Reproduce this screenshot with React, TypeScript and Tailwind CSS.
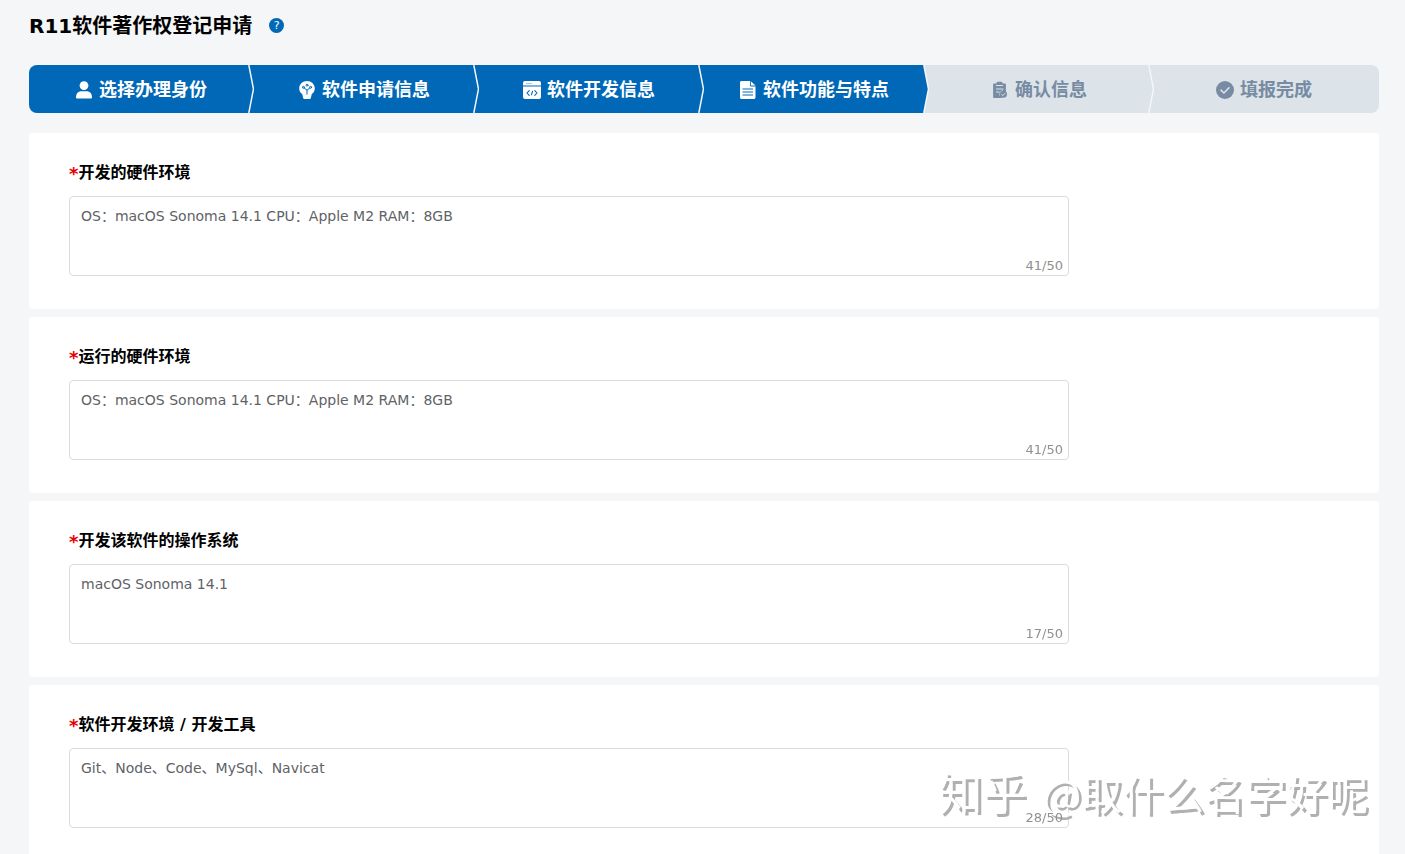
import { useState, type ReactNode } from "react";

interface Step {
  title: string;
  done: boolean;
  icon: ReactNode;
}

interface Field {
  id: string;
  label: string;
  value: string;
  savedLength: number;
}

const iconClass = "h-[18px] w-[18px] shrink-0";

const UserIcon = () => (
  <svg viewBox="0 0 18 18" className={iconClass} fill="currentColor" aria-hidden="true">
    <circle cx="9" cy="4.6" r="4.4" />
    <path d="M1 16.2c0-3.8 2.6-5.9 5.4-5.9h5.2c2.8 0 5.4 2.1 5.4 5.9 0 .9-.5 1.4-1.3 1.4H2.3c-.8 0-1.3-.5-1.3-1.4Z" />
  </svg>
);

const IdeaIcon = () => (
  <svg viewBox="0 0 18 18" className={iconClass} aria-hidden="true">
    <path
      fill="currentColor"
      d="M9 0C4.700 0 1.200 3.200 1.200 7.300c0 2.600 1.200 4.500 3 5.700l.9 3.700c.2.900.7 1.300 1.500 1.300h4.800c.8 0 1.300-.4 1.500-1.300l.9-3.700c1.800-1.200 3-3.100 3-5.700C16.800 3.200 13.300 0 9 0Z"
    />
    <g fill="none" stroke="#0068b7" strokeWidth="1" strokeLinecap="round" strokeLinejoin="round">
      <circle cx="5.400" cy="6.300" r="1" />
      <circle cx="12.600" cy="6.300" r="1" />
      <circle cx="9" cy="4.200" r=".9" />
      <path d="m6.200 7 2.800 2.200L11.800 7M9 9.200v4" />
    </g>
  </svg>
);

const CodeIcon = () => (
  <svg viewBox="0 0 18 18" className={iconClass} aria-hidden="true">
    <path fill="currentColor" d="M2 0h14a2 2 0 0 1 2 2v2.600H0V2a2 2 0 0 1 2-2Z" />
    <path fill="currentColor" d="M0 5.400h18V16a2 2 0 0 1-2 2H2a2 2 0 0 1-2-2V5.400Z" />
    <g fill="none" stroke="#0068b7" strokeWidth="1.100" strokeLinecap="round" strokeLinejoin="round">
      <path d="M3.500 2.600h5" strokeWidth=".4" />
      <path d="m6.200 9.600-2.200 2.400 2.200 2.400M11.800 9.600l2.200 2.400-2.200 2.400M9.600 10.200l-1.200 3.600" />
    </g>
  </svg>
);

const DocIcon = () => (
  <svg viewBox="0 0 18 18" className={iconClass} aria-hidden="true">
    <path fill="currentColor" d="M2.800 0h8.200v4.200c0 .8.400 1.200 1.200 1.200h4.300V16.200c0 1.200-.6 1.800-1.800 1.800H2.800C1.600 18 1 17.400 1 16.200V1.800C1 .6 1.600 0 2.800 0Z" />
    <path fill="currentColor" d="M11.800.2 16.500 4.600h-4c-.5 0-.7-.2-.7-.7V.2Z" />
    <path fill="none" stroke="#0068b7" strokeWidth="1" d="M3.500 8h10.500M3.500 11h10.500M3.500 14h10.500" />
  </svg>
);

const ClipboardIcon = () => (
  <svg viewBox="0 0 18 18" className={iconClass} aria-hidden="true">
    <path
      fill="currentColor"
      d="M3.300 2.500h2c.3-1.100.9-1.700 1.700-1.700h3c.8 0 1.400.6 1.700 1.700h2c.8 0 1.200.4 1.200 1.200v6l-4.500 7.300H3.300c-.8 0-1.200-.4-1.200-1.200V3.700c0-.8.400-1.200 1.200-1.200Z"
    />
    <circle cx="12.300" cy="13.200" r="3.600" fill="currentColor" />
    <g fill="none" stroke="#dce3e9" strokeWidth="1">
      <path d="M5 4.500h7M5 8h7.500M5 11h3.500" />
      <path d="m10.500 13.300 1.400 1.300 2.300-2.500" />
      <path d="M8.600 14.500c-.5-2.500 1-4.700 3.400-5.200" strokeWidth=".6" />
    </g>
  </svg>
);

const CheckIcon = () => (
  <svg viewBox="0 0 18 18" className={iconClass} aria-hidden="true">
    <circle cx="9" cy="9" r="9" fill="currentColor" />
    <path d="m5 9.200 2.900 2.800L13 6.800" fill="none" stroke="#dce3e9" strokeWidth="1.600" strokeLinecap="round" strokeLinejoin="round" />
  </svg>
);

const steps: Step[] = [
  { title: "选择办理身份", done: true, icon: <UserIcon /> },
  { title: "软件申请信息", done: true, icon: <IdeaIcon /> },
  { title: "软件开发信息", done: true, icon: <CodeIcon /> },
  { title: "软件功能与特点", done: true, icon: <DocIcon /> },
  { title: "确认信息", done: false, icon: <ClipboardIcon /> },
  { title: "填报完成", done: false, icon: <CheckIcon /> },
];

const fields: Field[] = [
  { id: "dev-hardware", label: "开发的硬件环境", value: "OS：macOS Sonoma 14.1 CPU：Apple M2 RAM：8GB", savedLength: 41 },
  { id: "run-hardware", label: "运行的硬件环境", value: "OS：macOS Sonoma 14.1 CPU：Apple M2 RAM：8GB", savedLength: 41 },
  { id: "dev-os", label: "开发该软件的操作系统", value: "macOS Sonoma 14.1", savedLength: 17 },
  { id: "dev-tools", label: "软件开发环境 / 开发工具", value: "Git、Node、Code、MySql、Navicat", savedLength: 28 },
];

function StepBar() {
  return (
    <ol className="grid h-12 grid-cols-6 overflow-hidden rounded-lg">
      {steps.map((step, i) => {
        const next = steps[i + 1];
        return (
          <li
            key={step.title}
            className={`relative flex items-center justify-center gap-1.5 pt-0.5 text-lg font-bold ${
              step.done ? "bg-[#0068b7] text-white" : "bg-[#dce3e9] text-[#778ca2]"
            } ${i > 0 ? "pr-[5px]" : "pr-px"}`}
          >
            {step.icon}
            <span>{step.title}</span>
            {next && (
              <svg viewBox="0 0 6 48" className="absolute top-0 right-0 h-12 w-1.5" aria-hidden="true">
                <path d="M.8 0 5.500 24 .8 48H6V0Z" fill={next.done ? "#0068b7" : "#dce3e9"} />
                <path d="M.8 0 5.500 24 .8 48" fill="none" stroke="#f4f6f8" strokeWidth="1.500" />
              </svg>
            )}
          </li>
        );
      })}
    </ol>
  );
}

function FieldCard({ field }: { field: Field }) {
  const [value, setValue] = useState(field.value);
  const count = value === field.value ? field.savedLength : value.length;

  return (
    <section className="rounded bg-white px-10 pt-7 pb-[33px]">
      <label htmlFor={field.id} className="flex h-6 items-center text-base font-bold text-black">
        <span className="pt-0.5 text-lg leading-6 text-[#e60000]">*</span>
        {field.label}
      </label>
      <div className="relative mt-[11px] max-w-[1000px]">
        <textarea
          id={field.id}
          maxLength={50}
          value={value}
          onChange={(e) => setValue(e.target.value)}
          className="block h-20 w-full resize-none rounded border border-[#dcdcdc] bg-white px-[11px] py-[7px] text-sm leading-6 text-[#606266] outline-none"
        />
        <span className="absolute right-1.5 bottom-0 z-10 text-[13px] leading-5 text-[#909090]">{count}/50</span>
      </div>
    </section>
  );
}

export default function App() {
  return (
    <div className="h-screen overflow-hidden bg-[#f4f6f8] pr-[26px] pl-[29px] font-['DejaVu_Sans','Noto_Sans_CJK_SC',sans-serif]">
      <header className="flex h-[65px] items-start pt-[11px]">
        <h1 className="text-xl leading-[30px] font-bold text-black">R11软件著作权登记申请</h1>
        <button
          type="button"
          aria-label="帮助"
          className="mt-[7px] ml-[17px] flex h-[15px] w-[15px] items-center justify-center rounded-full bg-[#0068b7] text-[11px] leading-none text-white"
        >
          ?
        </button>
      </header>

      <StepBar />

      <form className="mt-5 flex flex-col gap-2">
        {fields.map((field) => (
          <FieldCard key={field.id} field={field} />
        ))}
      </form>

      <div className="pointer-events-none fixed right-[37px] bottom-8 flex items-baseline gap-4 text-[41px] leading-[60px] whitespace-nowrap text-white font-['Noto_Sans_CJK_SC',sans-serif] [text-shadow:3px_3px_0_#b0b0b0]">
        <span className="text-[44px]">知乎</span>
        <span>@取什么名字好呢</span>
      </div>
    </div>
  );
}
